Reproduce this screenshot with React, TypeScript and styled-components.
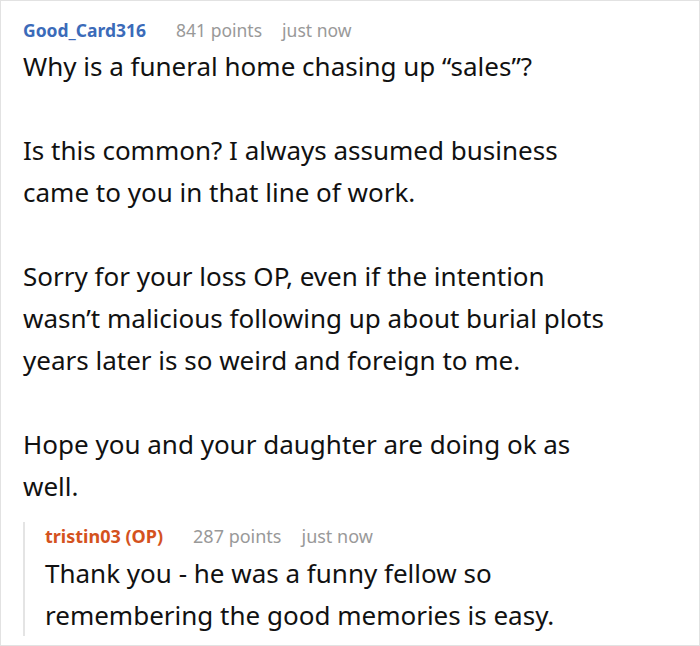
import styled, { createGlobalStyle } from "styled-components";

const GlobalStyle = createGlobalStyle`
  html, body {
    margin: 0;
    padding: 0;
    background: #ffffff;
  }
  body {
    font-family: "Noto Sans", "Open Sans", sans-serif;
  }
`;

const Card = styled.div`
  width: 700px;
  height: 646px;
  box-sizing: border-box;
  border: 1px solid #e2e2e2;
  padding: 15px 0 0 22px;
  overflow: hidden;
`;

const Meta = styled.div<{ $small?: boolean }>`
  display: flex;
  align-items: baseline;
  gap: 30px;
  font-size: ${(p) => (p.$small ? "18px" : "17.5px")};
  line-height: 28px;
`;

const Author = styled.span<{ $op?: boolean }>`
  font-weight: 700;
  color: ${(p) => (p.$op ? "#d4521e" : "#3b6bb9")};
`;

const Info = styled.span`
  color: #999999;
  display: flex;
  gap: 20px;
`;

const Body = styled.div<{ $gap?: number }>`
  font-size: 26px;
  line-height: 42px;
  color: #111111;
  margin-top: ${(p) => p.$gap ?? 1}px;
  p {
    margin: 0 0 42px;
  }
  p:last-child {
    margin-bottom: 0;
  }
`;

const Reply = styled.div`
  margin-top: 15px;
  border-left: 2px solid #e4e4e4;
  padding-left: 20px;
`;

export default function App() {
  return (
    <>
      <GlobalStyle />
      <Card>
        <Meta>
          <Author>Good_Card316</Author>
          <Info>
            <span>841 points</span>
            <span>just now</span>
          </Info>
        </Meta>
        <Body>
          <p>Why is a funeral home chasing up “sales”?</p>
          <p>
            Is this common? I always assumed business
            <br />
            came to you in that line of work.
          </p>
          <p>
            Sorry for your loss OP, even if the intention
            <br />
            wasn’t malicious following up about burial plots
            <br />
            years later is so weird and foreign to me.
          </p>
          <p>
            Hope you and your daughter are doing ok as
            <br />
            well.
          </p>
        </Body>
        <Reply>
          <Meta $small>
            <Author $op>tristin03 (OP)</Author>
            <Info>
              <span>287 points</span>
              <span>just now</span>
            </Info>
          </Meta>
          <Body $gap={2}>
            <p>
              Thank you - he was a funny fellow so
              <br />
              remembering the good memories is easy.
            </p>
          </Body>
        </Reply>
      </Card>
    </>
  );
}
